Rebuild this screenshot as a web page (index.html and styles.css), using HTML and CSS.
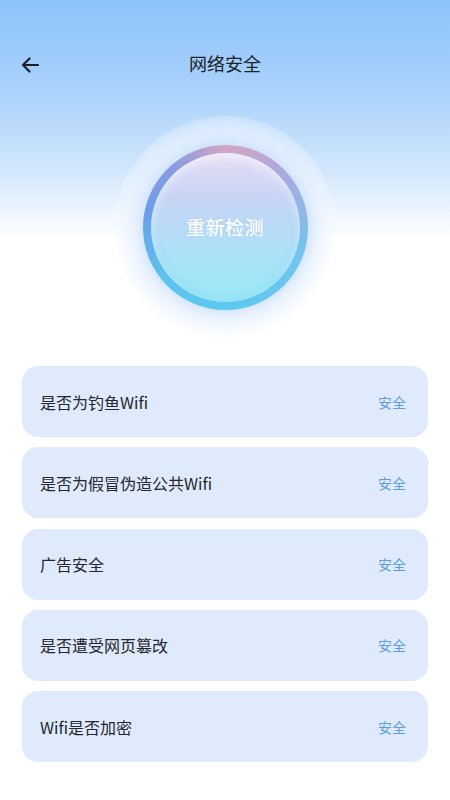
FILE: index.html
```html
<!DOCTYPE html>
<html lang="zh">
<head>
<meta charset="utf-8">
<link rel="stylesheet" href="styles.css">
</head>
<body>
<div class="page">
  <header class="topbar">
    <button class="back" aria-label="返回">
      <svg width="18" height="16" viewBox="0 0 18 16"><path d="M17 8H2M8.5 1.5L2 8l6.5 6.5" fill="none" stroke="#1d1f24" stroke-width="2.2" stroke-linecap="round" stroke-linejoin="round"/></svg>
    </button>
    <h1 class="title">网络安全</h1>
  </header>
  <section class="hero">
    <div class="halo">
      <div class="ring">
        <div class="core"><span class="core-text">重新检测</span></div>
      </div>
    </div>
  </section>
  <ul class="list">
    <li class="item"><span class="label">是否为钓鱼Wifi</span><span class="status">安全</span></li>
    <li class="item"><span class="label">是否为假冒伪造公共Wifi</span><span class="status">安全</span></li>
    <li class="item"><span class="label">广告安全</span><span class="status">安全</span></li>
    <li class="item"><span class="label">是否遭受网页篡改</span><span class="status">安全</span></li>
    <li class="item"><span class="label">Wifi是否加密</span><span class="status">安全</span></li>
  </ul>
</div>
</body>
</html>
```
FILE: styles.css
```css
* { box-sizing: border-box; }
html, body { margin: 0; padding: 0; }
body {
  width: 450px;
  min-height: 800px;
  font-family: "Noto Sans CJK SC", "Noto Sans", sans-serif;
  background: linear-gradient(180deg, #8dc3fb 0px, #a9d2fb 90px, #d2e7fc 170px, #ffffff 240px, #ffffff 800px);
  color: #1f2227;
}
.page { display: flex; flex-direction: column; }
.topbar {
  position: relative;
  height: 50px;
  margin-top: 38px;
  margin-bottom: 2px;
  display: flex;
  align-items: center;
  justify-content: center;
}
.back {
  position: absolute;
  left: 21px;
  top: 19px;
  width: 18px;
  height: 16px;
  padding: 0;
  border: 0;
  background: none;
  display: flex;
}
.title {
  margin: 0;
  font-size: 18px;
  font-weight: 400;
  color: #1f2227;
  line-height: 1;
}
.hero {
  display: flex;
  justify-content: center;
  padding-top: 25px;
  padding-bottom: 27px;
}
.halo {
  width: 224px;
  height: 224px;
  border-radius: 50%;
  display: flex;
  align-items: center;
  justify-content: center;
  background: radial-gradient(circle, rgba(226,238,253,0.0) 0, rgba(226,238,253,0.85) 84px, rgba(234,242,254,0.7) 96px, rgba(240,246,254,0.5) 104px, rgba(246,250,255,0.28) 110px, rgba(255,255,255,0) 112px);
}
.ring {
  width: 165px;
  height: 165px;
  border-radius: 50%;
  padding: 8px;
  background: conic-gradient(from 0deg, #d2a6c4 0deg, #a9aae0 50deg, #72c4ef 110deg, #5cc8f0 180deg, #5cc4ef 230deg, #6a9ee8 280deg, #8a9be0 320deg, #d2a6c4 360deg);
  box-shadow: 0 0 12px rgba(140,190,245,0.35);
}
.core {
  width: 100%;
  height: 100%;
  border-radius: 50%;
  display: flex;
  align-items: center;
  justify-content: center;
  background: linear-gradient(180deg, #e6def4 0%, #c8d4f6 30%, #aee0f8 65%, #9ceaf8 100%);
  box-shadow: inset 0 4px 10px rgba(255,255,255,0.6), inset 0 -4px 10px rgba(110,200,240,0.35);
}
.core-text {
  color: #ffffff;
  font-size: 19px;
  font-weight: 500;
  letter-spacing: 0.5px;
  line-height: 1;
  margin-top: -2px;
  text-shadow: 0 0 2px rgba(120,160,220,0.3);
}
.list {
  list-style: none;
  margin: 0;
  padding: 0 22px;
  display: flex;
  flex-direction: column;
  gap: 10.3px;
}
.item {
  height: 71px;
  border-radius: 16px;
  background: #dfebfc;
  display: flex;
  align-items: center;
  justify-content: space-between;
  padding: 0 22px 0 18px;
}
.label {
  font-size: 16px;
  color: #24272c;
}
.status {
  font-size: 14px;
  color: #5c9ce0;
}
```
